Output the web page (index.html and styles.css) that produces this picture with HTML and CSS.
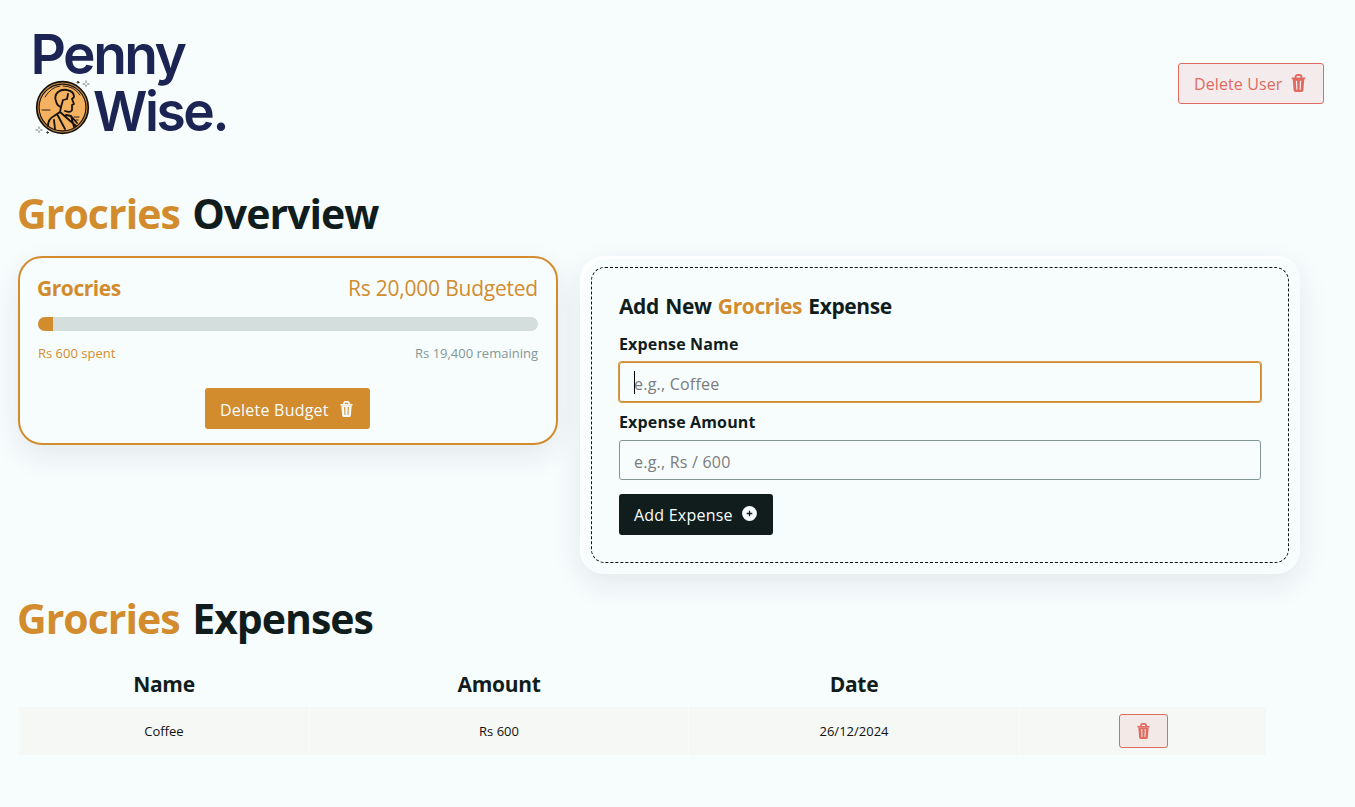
FILE: index.html
```html
<!DOCTYPE html>
<html lang="en">
<head>
<meta charset="utf-8">
<title>Penny Wise</title>
<link rel="stylesheet" href="styles.css">
</head>
<body>
<svg class="defs" aria-hidden="true">
  <symbol id="trash" viewBox="0 0 14 18">
    <path d="M4 4V3a2 2 0 0 1 2-2h2a2 2 0 0 1 2 2v1M.2 4.3h13.6" fill="none" stroke="currentColor" stroke-width="1.8"/>
    <path fill="currentColor" fill-rule="evenodd" d="M1.2 5h11.6l-.9 11.2Q11.8 18 10 18H4q-1.8 0-1.9-1.8zM4.300 6.700l.5 9h1.1l-.3-9zm4.100 0-.3 9h1.100l.5-9z"/>
  </symbol>
</svg>
<header class="header">
  <svg class="logo" viewBox="0 0 210 115" role="img">
    <g class="logo-text">
      <text x="7.500" y="50" textLength="154" lengthAdjust="spacingAndGlyphs">Penny</text>
      <text x="70" y="107" textLength="134" lengthAdjust="spacingAndGlyphs">Wise.</text>
    </g>
    <g fill="none" stroke="#15120f" stroke-linecap="round" stroke-linejoin="round">
      <circle cx="39.5" cy="83.5" r="25.8" fill="#c98d43" stroke-width="1.7"/>
      <circle cx="39.5" cy="83.5" r="23.4" fill="#f4b15f" stroke-width="1.1"/>
      <path d="M22 73q6-10 15-11M40 62q11 0 17 9" stroke-width=".9"/>
      <path d="M25 102q0-7 6-10l6-4 1-5q-4-1-5-6-2-5 2-9 4-3 9-2 7 1 7 7l-2 2 2 5-2 1v5q-1 3-7 1M38 83l2-7 4-1 1-5M37 88l16 14M34 90l8 15M43 91l5 1 6 7M48 92l3 11M31 96l1 9" stroke-width="1.8"/>
      <path d="M19 86h8M51 93h5M53 96h2" stroke-width=".9"/>
      <path d="M63 57v1.500M63 61v1.500M60 60h1.500M64.500 60H66M16 103v1.500M16 107v1.500M13 106h1.500M17.500 106H19" stroke-width=".6"/>
      <circle cx="55" cy="58.300" r=".8"/><circle cx="24.500" cy="108.500" r=".7"/>
    </g>
  </svg>
  <button class="btn btn-warning btn-user">
    <span class="t-user">Delete User</span>
    <svg class="icon-lg"><use href="#trash"/></svg>
  </button>
</header>
<main class="page">
  <h1 class="h1"><span class="accent">Grocries</span> <span>Overview</span></h1>
  <div class="cards">
    <section class="budget">
      <div class="row title"><h3 class="t-name">Grocries</h3><p class="t-budgeted">Rs 20,000 Budgeted</p></div>
      <div class="track"><div class="fill" style="width:3%"></div></div>
      <div class="row small"><span>Rs 600 spent</span><span class="t-remain">Rs 19,400 remaining</span></div>
      <button class="btn btn-accent"><span class="t-delb">Delete Budget</span><svg class="icon"><use href="#trash"/></svg></button>
    </section>
    <section class="form-card">
      <form class="form">
        <h2 class="h2">Add New <span class="accent">Grocries</span> Expense</h2>
        <label class="label" for="name">Expense Name</label>
        <div class="field"><input class="input focused" id="name" placeholder="e.g., Coffee"><i class="caret"></i></div>
        <label class="label" for="amount">Expense Amount</label>
        <div class="field"><input class="input" id="amount" placeholder="e.g., Rs / 600"></div>
        <button type="button" class="btn btn-dark"><span class="t-add">Add Expense</span>
          <svg class="icon-plus" viewBox="0 0 15 15"><circle cx="7.500" cy="7.500" r="7.400" fill="#f7fdfd"/><path d="M7.500 4.700v5.600M4.700 7.500h5.600" stroke="#111d1d" stroke-width="1.300"/></svg>
        </button>
      </form>
    </section>
  </div>
  <h1 class="h1 second"><span class="accent">Grocries</span> <span>Expenses</span></h1>
  <div class="table">
    <div class="th">Name</div><div class="th">Amount</div><div class="th">Date</div><div class="th"></div>
    <div class="td">Coffee</div><div class="td">Rs 600</div><div class="td">26/12/2024</div>
    <div class="td"><button class="btn btn-warning btn-row"><svg class="icon"><use href="#trash"/></svg></button></div>
  </div>
</main>
</body>
</html>
```
FILE: styles.css
```css
* { box-sizing: border-box; margin: 0; padding: 0; }
body {
  background: #f7fdfd;
  color: #111d1d;
  font-family: "Open Sans", "Noto Sans", sans-serif;
  height: 807px;
  overflow: hidden;
}
.defs { display: none; }
.header {
  height: 168px;
  padding: 24px 31px 0 23px;
  display: flex;
  align-items: flex-start;
  justify-content: space-between;
}
.logo { width: 210px; height: 115px; overflow: visible; }
.logo-text { font: 600 55px Inter, sans-serif; letter-spacing: -2.5px; fill: #1b2453; }
.btn {
  display: flex;
  align-items: center;
  height: 41px;
  padding: 1px 15px 0 14px;
  border: 1px solid transparent;
  border-radius: 3px;
  font: 400 16px/20px "Open Sans", sans-serif;
  white-space: nowrap;
  justify-content: space-between;
}
.btn-warning { width: 146px; color: #e16a61; background: #f4ecec; border-color: #e16a61; padding-left: 15px; padding-right: 17px; }
.btn-user { margin-top: 39px; }
.t-user { letter-spacing: .1px; }
.icon-lg { width: 15px; height: 18px; margin-top: -3px; }
.icon { width: 13px; height: 16px; margin-top: -2px; }
.icon-plus { width: 15px; height: 15px; margin-top: -3px; }
.btn-accent { width: 165px; color: #f7fdfd; background: #d28c2d; margin: 22px 0 0 167px; padding-top: 2px; padding-right: 16px; }
.t-delb { letter-spacing: .23px; }
.btn-dark { width: 154px; color: #f7fdfd; background: #111d1d; margin-top: 14px; }
.t-add { letter-spacing: .22px; }
.btn-row { width: 49px; height: 34px; background: #f3e9e7; justify-content: center; padding: 1px 0 0; }
.accent { color: #d28c2d; }
.page { padding: 18px 18px 0; }
.h1 { font-size: 41px; line-height: 54px; height: 70px; letter-spacing: -.95px; word-spacing: 2.5px; margin-left: -1px; white-space: nowrap; }
.cards { display: flex; gap: 22px; align-items: flex-start; }
.budget {
  width: 540px;
  height: 189px;
  border: 2px solid #d28c2d;
  border-radius: 24px;
  padding: 15px 18px;
  box-shadow: 0 10px 30px rgba(35, 35, 70, .09);
}
.row { display: flex; justify-content: space-between; color: #d28c2d; }
.title { font-size: 21px; line-height: 31px; height: 44px; }
.t-name { font-size: 21px; letter-spacing: -.45px; margin-left: -1px; }
.t-budgeted { letter-spacing: -.22px; }
.track { height: 14px; border-radius: 7px; background: #d3dedd; overflow: hidden; }
.fill { height: 100%; background: #d28c2d; }
.small { font-size: 13px; line-height: 18px; margin-top: 13px; height: 22px; }
.t-remain { color: #829695; }
.form-card {
  width: 720px;
  height: 318px;
  padding: 11px;
  border-radius: 24px;
  box-shadow: 0 10px 30px rgba(35, 35, 70, .09), inset 3px 3px 0 #fff;
}
.form { height: 296px; border: 1px dashed #111; border-radius: 14px; padding: 23px 27px; }
.h2 { font-size: 21px; line-height: 30px; height: 42px; letter-spacing: -.4px; word-spacing: 1.3px; white-space: nowrap; }
.label { display: block; font-size: 16px; font-weight: 700; line-height: 22px; height: 29px; letter-spacing: .15px; white-space: nowrap; }
.field { position: relative; height: 49px; }
.field + .btn { margin-top: 5px; }
.input {
  width: 642px;
  height: 40px;
  border: 1px solid #829695;
  border-radius: 3px;
  background: transparent;
  padding: 4px 14px 0;
  font: 400 16px "Open Sans", sans-serif;
  letter-spacing: .22px;
}
.input::placeholder { color: #7b7b7b; opacity: 1; }
.focused { border-color: #d28c2d; box-shadow: 0 0 0 1px #d89a49; }
.caret { position: absolute; left: 15px; top: 9px; width: 1px; height: 23px; background: #000; }
.second { margin-top: 18px; height: 71px; line-height: 53px; letter-spacing: -1px; word-spacing: 3px; }
.table { display: grid; grid-template-columns: 290px 378px 330px 246px; grid-template-rows: 44px 48px; column-gap: 1px; margin-left: 1px; }
.th { text-align: center; font-size: 21px; font-weight: 700; line-height: 43px; letter-spacing: -.3px; }
.td { display: flex; align-items: center; justify-content: center; background: #f6f8f5; font-size: 13px; color: #111; }
```
